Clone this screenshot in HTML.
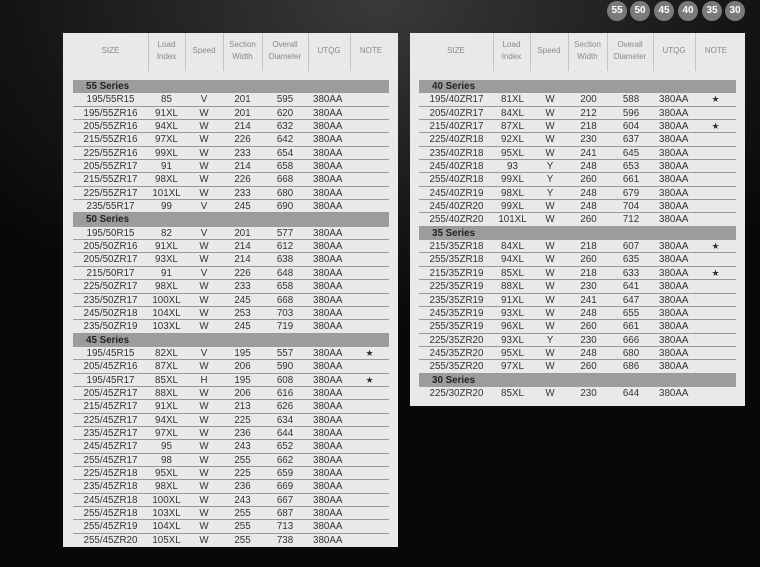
<!DOCTYPE html>
<html><head><meta charset="utf-8"><style>
*{margin:0;padding:0;box-sizing:border-box}
body{width:760px;height:567px;overflow:hidden;background:radial-gradient(ellipse 520px 330px at 50% 0,#3a3a3a,#141414 70%,#080808);font-family:"Liberation Sans",sans-serif;position:relative}
.c{position:absolute;top:1px;width:20px;height:20px;border-radius:50%;background:#7a7a7a;color:#fff;font:bold 10px/20px "Liberation Sans",sans-serif;text-align:center}
.p{position:absolute;top:33px;background:#e9e9e9}
.d{position:absolute;top:0;width:1px;height:38px;background:#c4c4c4}
.h{position:absolute;top:6px;font-size:8px;line-height:12px;color:#888;text-align:center}
.t{position:absolute;top:47px}
.r{display:flex;height:13.35px;line-height:13px;font-size:9.8px;color:#333;border-bottom:1px solid #999}
.r span{text-align:center;white-space:nowrap}
.r span:nth-child(1){width:75px}.r span:nth-child(2){width:37px}.r span:nth-child(3){width:38px}.r span:nth-child(4){width:39px}.r span:nth-child(5){width:46px}.r span:nth-child(6){width:42px;text-align:left;padding-left:5px}.r span:nth-child(7){width:39px;font-size:9px}
.s{height:13.35px;line-height:13px;background:#9c9c9c;font-size:9.8px;font-weight:bold;color:#222;padding-left:13px}
</style></head><body>
<div class="c" style="left:607px">55</div><div class="c" style="left:630px">50</div><div class="c" style="left:654px">45</div><div class="c" style="left:678px">40</div><div class="c" style="left:702px">35</div><div class="c" style="left:725px">30</div>

<div class="p" style="left:63px;width:335px;height:514px">
<div class="d" style="left:85px"></div><div class="d" style="left:122px"></div><div class="d" style="left:160px"></div><div class="d" style="left:199px"></div><div class="d" style="left:245px"></div><div class="d" style="left:287px"></div>
<div class="h" style="left:10px;width:75px;top:12px">SIZE</div>
<div class="h" style="left:85px;width:37px">Load<br>Index</div>
<div class="h" style="left:122px;width:38px;top:12px">Speed</div>
<div class="h" style="left:160px;width:39px">Section<br>Width</div>
<div class="h" style="left:199px;width:46px">Overall<br>Diameter</div>
<div class="h" style="left:245px;width:42px;top:12px">UTQG</div>
<div class="h" style="left:287px;width:42px;top:12px">NOTE</div>
<div class="t" style="left:10px;width:316px">
<div class="s">55 Series</div>
<div class="r"><span>195/55R15</span><span>85</span><span>V</span><span>201</span><span>595</span><span>380AA</span><span></span></div>
<div class="r"><span>195/55ZR16</span><span>91XL</span><span>W</span><span>201</span><span>620</span><span>380AA</span><span></span></div>
<div class="r"><span>205/55ZR16</span><span>94XL</span><span>W</span><span>214</span><span>632</span><span>380AA</span><span></span></div>
<div class="r"><span>215/55ZR16</span><span>97XL</span><span>W</span><span>226</span><span>642</span><span>380AA</span><span></span></div>
<div class="r"><span>225/55ZR16</span><span>99XL</span><span>W</span><span>233</span><span>654</span><span>380AA</span><span></span></div>
<div class="r"><span>205/55ZR17</span><span>91</span><span>W</span><span>214</span><span>658</span><span>380AA</span><span></span></div>
<div class="r"><span>215/55ZR17</span><span>98XL</span><span>W</span><span>226</span><span>668</span><span>380AA</span><span></span></div>
<div class="r"><span>225/55ZR17</span><span>101XL</span><span>W</span><span>233</span><span>680</span><span>380AA</span><span></span></div>
<div class="r"><span>235/55R17</span><span>99</span><span>V</span><span>245</span><span>690</span><span>380AA</span><span></span></div>
<div class="s">50 Series</div>
<div class="r"><span>195/50R15</span><span>82</span><span>V</span><span>201</span><span>577</span><span>380AA</span><span></span></div>
<div class="r"><span>205/50ZR16</span><span>91XL</span><span>W</span><span>214</span><span>612</span><span>380AA</span><span></span></div>
<div class="r"><span>205/50ZR17</span><span>93XL</span><span>W</span><span>214</span><span>638</span><span>380AA</span><span></span></div>
<div class="r"><span>215/50R17</span><span>91</span><span>V</span><span>226</span><span>648</span><span>380AA</span><span></span></div>
<div class="r"><span>225/50ZR17</span><span>98XL</span><span>W</span><span>233</span><span>658</span><span>380AA</span><span></span></div>
<div class="r"><span>235/50ZR17</span><span>100XL</span><span>W</span><span>245</span><span>668</span><span>380AA</span><span></span></div>
<div class="r"><span>245/50ZR18</span><span>104XL</span><span>W</span><span>253</span><span>703</span><span>380AA</span><span></span></div>
<div class="r"><span>235/50ZR19</span><span>103XL</span><span>W</span><span>245</span><span>719</span><span>380AA</span><span></span></div>
<div class="s">45 Series</div>
<div class="r"><span>195/45R15</span><span>82XL</span><span>V</span><span>195</span><span>557</span><span>380AA</span><span>★</span></div>
<div class="r"><span>205/45ZR16</span><span>87XL</span><span>W</span><span>206</span><span>590</span><span>380AA</span><span></span></div>
<div class="r"><span>195/45R17</span><span>85XL</span><span>H</span><span>195</span><span>608</span><span>380AA</span><span>★</span></div>
<div class="r"><span>205/45ZR17</span><span>88XL</span><span>W</span><span>206</span><span>616</span><span>380AA</span><span></span></div>
<div class="r"><span>215/45ZR17</span><span>91XL</span><span>W</span><span>213</span><span>626</span><span>380AA</span><span></span></div>
<div class="r"><span>225/45ZR17</span><span>94XL</span><span>W</span><span>225</span><span>634</span><span>380AA</span><span></span></div>
<div class="r"><span>235/45ZR17</span><span>97XL</span><span>W</span><span>236</span><span>644</span><span>380AA</span><span></span></div>
<div class="r"><span>245/45ZR17</span><span>95</span><span>W</span><span>243</span><span>652</span><span>380AA</span><span></span></div>
<div class="r"><span>255/45ZR17</span><span>98</span><span>W</span><span>255</span><span>662</span><span>380AA</span><span></span></div>
<div class="r"><span>225/45ZR18</span><span>95XL</span><span>W</span><span>225</span><span>659</span><span>380AA</span><span></span></div>
<div class="r"><span>235/45ZR18</span><span>98XL</span><span>W</span><span>236</span><span>669</span><span>380AA</span><span></span></div>
<div class="r"><span>245/45ZR18</span><span>100XL</span><span>W</span><span>243</span><span>667</span><span>380AA</span><span></span></div>
<div class="r"><span>255/45ZR18</span><span>103XL</span><span>W</span><span>255</span><span>687</span><span>380AA</span><span></span></div>
<div class="r"><span>255/45ZR19</span><span>104XL</span><span>W</span><span>255</span><span>713</span><span>380AA</span><span></span></div>
<div class="r" style="border-bottom:none"><span>255/45ZR20</span><span>105XL</span><span>W</span><span>255</span><span>738</span><span>380AA</span><span></span></div>
</div></div>

<div class="p" style="left:410px;width:335px;height:373px">
<div class="d" style="left:83px"></div><div class="d" style="left:120px"></div><div class="d" style="left:158px"></div><div class="d" style="left:197px"></div><div class="d" style="left:243px"></div><div class="d" style="left:285px"></div>
<div class="h" style="left:9px;width:74px;top:12px">SIZE</div>
<div class="h" style="left:83px;width:37px">Load<br>Index</div>
<div class="h" style="left:120px;width:38px;top:12px">Speed</div>
<div class="h" style="left:158px;width:39px">Section<br>Width</div>
<div class="h" style="left:197px;width:46px">Overall<br>Diameter</div>
<div class="h" style="left:243px;width:42px;top:12px">UTQG</div>
<div class="h" style="left:285px;width:42px;top:12px">NOTE</div>
<div class="t" style="left:9px;width:317px">
<div class="s">40 Series</div>
<div class="r"><span>195/40ZR17</span><span>81XL</span><span>W</span><span>200</span><span>588</span><span>380AA</span><span>★</span></div>
<div class="r"><span>205/40ZR17</span><span>84XL</span><span>W</span><span>212</span><span>596</span><span>380AA</span><span></span></div>
<div class="r"><span>215/40ZR17</span><span>87XL</span><span>W</span><span>218</span><span>604</span><span>380AA</span><span>★</span></div>
<div class="r"><span>225/40ZR18</span><span>92XL</span><span>W</span><span>230</span><span>637</span><span>380AA</span><span></span></div>
<div class="r"><span>235/40ZR18</span><span>95XL</span><span>W</span><span>241</span><span>645</span><span>380AA</span><span></span></div>
<div class="r"><span>245/40ZR18</span><span>93</span><span>Y</span><span>248</span><span>653</span><span>380AA</span><span></span></div>
<div class="r"><span>255/40ZR18</span><span>99XL</span><span>Y</span><span>260</span><span>661</span><span>380AA</span><span></span></div>
<div class="r"><span>245/40ZR19</span><span>98XL</span><span>Y</span><span>248</span><span>679</span><span>380AA</span><span></span></div>
<div class="r"><span>245/40ZR20</span><span>99XL</span><span>W</span><span>248</span><span>704</span><span>380AA</span><span></span></div>
<div class="r"><span>255/40ZR20</span><span>101XL</span><span>W</span><span>260</span><span>712</span><span>380AA</span><span></span></div>
<div class="s">35 Series</div>
<div class="r"><span>215/35ZR18</span><span>84XL</span><span>W</span><span>218</span><span>607</span><span>380AA</span><span>★</span></div>
<div class="r"><span>255/35ZR18</span><span>94XL</span><span>W</span><span>260</span><span>635</span><span>380AA</span><span></span></div>
<div class="r"><span>215/35ZR19</span><span>85XL</span><span>W</span><span>218</span><span>633</span><span>380AA</span><span>★</span></div>
<div class="r"><span>225/35ZR19</span><span>88XL</span><span>W</span><span>230</span><span>641</span><span>380AA</span><span></span></div>
<div class="r"><span>235/35ZR19</span><span>91XL</span><span>W</span><span>241</span><span>647</span><span>380AA</span><span></span></div>
<div class="r"><span>245/35ZR19</span><span>93XL</span><span>W</span><span>248</span><span>655</span><span>380AA</span><span></span></div>
<div class="r"><span>255/35ZR19</span><span>96XL</span><span>W</span><span>260</span><span>661</span><span>380AA</span><span></span></div>
<div class="r"><span>225/35ZR20</span><span>93XL</span><span>Y</span><span>230</span><span>666</span><span>380AA</span><span></span></div>
<div class="r"><span>245/35ZR20</span><span>95XL</span><span>W</span><span>248</span><span>680</span><span>380AA</span><span></span></div>
<div class="r"><span>255/35ZR20</span><span>97XL</span><span>W</span><span>260</span><span>686</span><span>380AA</span><span></span></div>
<div class="s">30 Series</div>
<div class="r" style="border-bottom:none"><span>225/30ZR20</span><span>85XL</span><span>W</span><span>230</span><span>644</span><span>380AA</span><span></span></div>
</div></div>
</body></html>
